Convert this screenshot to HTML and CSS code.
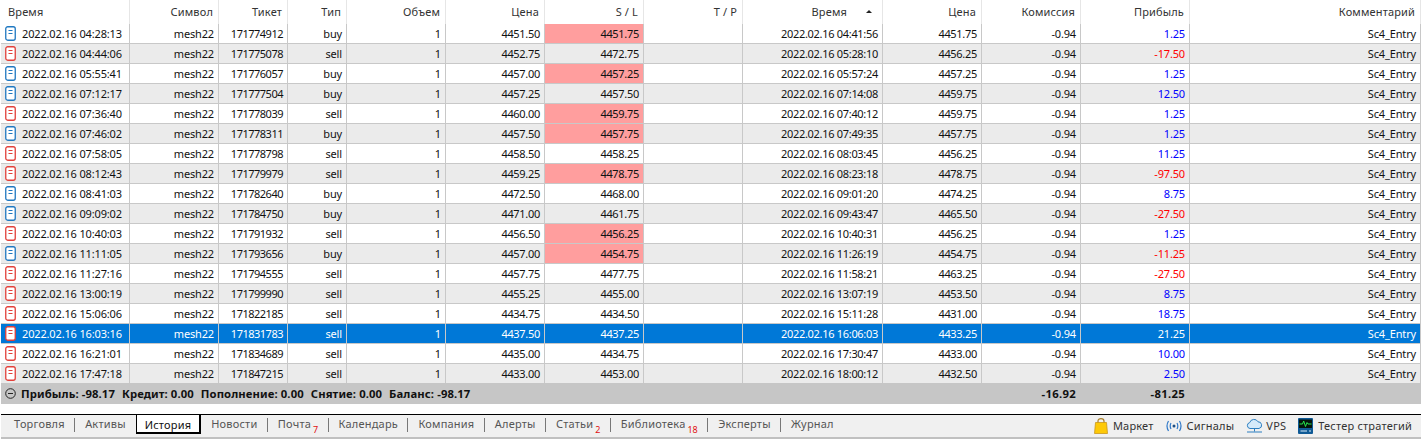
FILE: index.html
```html
<!DOCTYPE html>
<html lang="ru">
<head>
<meta charset="utf-8">
<title>История</title>
<link rel="stylesheet" href="styles.css">
</head>
<body>
<svg class="defs" width="0" height="0" aria-hidden="true">
<symbol id="doc" viewBox="0 0 11 15"><rect x=".75" y=".75" width="9.500" height="13.500" rx="2" fill="#fff" stroke="currentColor" stroke-width="1.300"/><path d="M3.500 4.500h4M3.500 7.500h4" stroke="currentColor" stroke-width="1.100"/></symbol>
</svg>
<main class="terminal">
<table class="grid">
<colgroup><col class="c1"><col class="c2"><col class="c3"><col class="c4"><col class="c5"><col class="c6"><col class="c7"><col class="c8"><col class="c9"><col class="c10"><col class="c11"><col class="c12"><col class="c13"></colgroup>
<thead><tr><th class="left">Время</th><th>Символ</th><th>Тикет</th><th>Тип</th><th>Объем</th><th>Цена</th><th>S / L</th><th>T / P</th><th class="sorted">Время<span class="arrow"></span></th><th>Цена</th><th>Комиссия</th><th>Прибыль</th><th>Комментарий</th></tr></thead>
<tbody>
<tr><td class="left"><svg class="ico buy"><use href="#doc"/></svg>2022.02.16 04:28:13</td><td>mesh22</td><td>171774912</td><td>buy</td><td>1</td><td>4451.50</td><td class="hit">4451.75</td><td></td><td>2022.02.16 04:41:56</td><td>4451.75</td><td>-0.94</td><td class="pos">1.25</td><td>Sc4_Entry</td></tr>
<tr><td class="left"><svg class="ico sell"><use href="#doc"/></svg>2022.02.16 04:44:06</td><td>mesh22</td><td>171775078</td><td>sell</td><td>1</td><td>4452.75</td><td>4472.75</td><td></td><td>2022.02.16 05:28:10</td><td>4456.25</td><td>-0.94</td><td class="neg">-17.50</td><td>Sc4_Entry</td></tr>
<tr><td class="left"><svg class="ico buy"><use href="#doc"/></svg>2022.02.16 05:55:41</td><td>mesh22</td><td>171776057</td><td>buy</td><td>1</td><td>4457.00</td><td class="hit">4457.25</td><td></td><td>2022.02.16 05:57:24</td><td>4457.25</td><td>-0.94</td><td class="pos">1.25</td><td>Sc4_Entry</td></tr>
<tr><td class="left"><svg class="ico buy"><use href="#doc"/></svg>2022.02.16 07:12:17</td><td>mesh22</td><td>171777504</td><td>buy</td><td>1</td><td>4457.25</td><td>4457.50</td><td></td><td>2022.02.16 07:14:08</td><td>4459.75</td><td>-0.94</td><td class="pos">12.50</td><td>Sc4_Entry</td></tr>
<tr><td class="left"><svg class="ico sell"><use href="#doc"/></svg>2022.02.16 07:36:40</td><td>mesh22</td><td>171778039</td><td>sell</td><td>1</td><td>4460.00</td><td class="hit">4459.75</td><td></td><td>2022.02.16 07:40:12</td><td>4459.75</td><td>-0.94</td><td class="pos">1.25</td><td>Sc4_Entry</td></tr>
<tr><td class="left"><svg class="ico buy"><use href="#doc"/></svg>2022.02.16 07:46:02</td><td>mesh22</td><td>171778311</td><td>buy</td><td>1</td><td>4457.50</td><td class="hit">4457.75</td><td></td><td>2022.02.16 07:49:35</td><td>4457.75</td><td>-0.94</td><td class="pos">1.25</td><td>Sc4_Entry</td></tr>
<tr><td class="left"><svg class="ico sell"><use href="#doc"/></svg>2022.02.16 07:58:05</td><td>mesh22</td><td>171778798</td><td>sell</td><td>1</td><td>4458.50</td><td>4458.25</td><td></td><td>2022.02.16 08:03:45</td><td>4456.25</td><td>-0.94</td><td class="pos">11.25</td><td>Sc4_Entry</td></tr>
<tr><td class="left"><svg class="ico sell"><use href="#doc"/></svg>2022.02.16 08:12:43</td><td>mesh22</td><td>171779979</td><td>sell</td><td>1</td><td>4459.25</td><td class="hit">4478.75</td><td></td><td>2022.02.16 08:23:18</td><td>4478.75</td><td>-0.94</td><td class="neg">-97.50</td><td>Sc4_Entry</td></tr>
<tr><td class="left"><svg class="ico buy"><use href="#doc"/></svg>2022.02.16 08:41:03</td><td>mesh22</td><td>171782640</td><td>buy</td><td>1</td><td>4472.50</td><td>4468.00</td><td></td><td>2022.02.16 09:01:20</td><td>4474.25</td><td>-0.94</td><td class="pos">8.75</td><td>Sc4_Entry</td></tr>
<tr><td class="left"><svg class="ico buy"><use href="#doc"/></svg>2022.02.16 09:09:02</td><td>mesh22</td><td>171784750</td><td>buy</td><td>1</td><td>4471.00</td><td>4461.75</td><td></td><td>2022.02.16 09:43:47</td><td>4465.50</td><td>-0.94</td><td class="neg">-27.50</td><td>Sc4_Entry</td></tr>
<tr><td class="left"><svg class="ico sell"><use href="#doc"/></svg>2022.02.16 10:40:03</td><td>mesh22</td><td>171791932</td><td>sell</td><td>1</td><td>4456.50</td><td class="hit">4456.25</td><td></td><td>2022.02.16 10:40:31</td><td>4456.25</td><td>-0.94</td><td class="pos">1.25</td><td>Sc4_Entry</td></tr>
<tr><td class="left"><svg class="ico buy"><use href="#doc"/></svg>2022.02.16 11:11:05</td><td>mesh22</td><td>171793656</td><td>buy</td><td>1</td><td>4457.00</td><td class="hit">4454.75</td><td></td><td>2022.02.16 11:26:19</td><td>4454.75</td><td>-0.94</td><td class="neg">-11.25</td><td>Sc4_Entry</td></tr>
<tr><td class="left"><svg class="ico sell"><use href="#doc"/></svg>2022.02.16 11:27:16</td><td>mesh22</td><td>171794555</td><td>sell</td><td>1</td><td>4457.75</td><td>4477.75</td><td></td><td>2022.02.16 11:58:21</td><td>4463.25</td><td>-0.94</td><td class="neg">-27.50</td><td>Sc4_Entry</td></tr>
<tr><td class="left"><svg class="ico sell"><use href="#doc"/></svg>2022.02.16 13:00:19</td><td>mesh22</td><td>171799990</td><td>sell</td><td>1</td><td>4455.25</td><td>4455.00</td><td></td><td>2022.02.16 13:07:19</td><td>4453.50</td><td>-0.94</td><td class="pos">8.75</td><td>Sc4_Entry</td></tr>
<tr><td class="left"><svg class="ico sell"><use href="#doc"/></svg>2022.02.16 15:06:06</td><td>mesh22</td><td>171822185</td><td>sell</td><td>1</td><td>4434.75</td><td>4434.50</td><td></td><td>2022.02.16 15:11:28</td><td>4431.00</td><td>-0.94</td><td class="pos">18.75</td><td>Sc4_Entry</td></tr>
<tr class="selected"><td class="left"><svg class="ico sell"><use href="#doc"/></svg>2022.02.16 16:03:16</td><td>mesh22</td><td>171831783</td><td>sell</td><td>1</td><td>4437.50</td><td>4437.25</td><td></td><td>2022.02.16 16:06:03</td><td>4433.25</td><td>-0.94</td><td>21.25</td><td>Sc4_Entry</td></tr>
<tr><td class="left"><svg class="ico sell"><use href="#doc"/></svg>2022.02.16 16:21:01</td><td>mesh22</td><td>171834689</td><td>sell</td><td>1</td><td>4435.00</td><td>4434.75</td><td></td><td>2022.02.16 17:30:47</td><td>4433.00</td><td>-0.94</td><td class="pos">10.00</td><td>Sc4_Entry</td></tr>
<tr class="last"><td class="left"><svg class="ico sell"><use href="#doc"/></svg>2022.02.16 17:47:18</td><td>mesh22</td><td>171847215</td><td>sell</td><td>1</td><td>4433.00</td><td>4453.00</td><td></td><td>2022.02.16 18:00:12</td><td>4432.50</td><td>-0.94</td><td class="pos">2.50</td><td>Sc4_Entry</td></tr>
</tbody>
<tfoot><tr><td colspan="10" class="summary"><span class="sum-line"><svg class="collapse" viewBox="0 0 11 11"><circle cx="5.500" cy="5.500" r="4.800" fill="none" stroke="#222"/><path d="M3 5.500h5" stroke="#222"/></svg><span>Прибыль: -98.17</span><span>Кредит: 0.00</span><span>Пополнение: 0.00</span><span>Снятие: 0.00</span><span>Баланс: -98.17</span></span></td><td>-16.92</td><td>-81.25</td><td></td></tr></tfoot>
</table>
<footer class="tabbar">
<nav class="tabs">
<a class="tab">Торговля</a><a class="tab">Активы</a><a class="tab active">История</a><a class="tab first">Новости</a><a class="tab">Почта<sub>7</sub></a><a class="tab">Календарь</a><a class="tab">Компания</a><a class="tab">Алерты</a><a class="tab">Статьи<sub>2</sub></a><a class="tab">Библиотека<sub>18</sub></a><a class="tab">Эксперты</a><a class="tab">Журнал</a>
</nav>
<div class="tools">
<span class="tool"><svg width="14" height="16" viewBox="0 0 14 16"><path d="M4 6V3C4 1.600 5.200 .7 7 .7s3 .9 3 2.300v3" fill="none" stroke="#a87f2a" stroke-width="1.200"/><path d="M1.500 4.500h11l1 11H.5z" fill="#fdc908" stroke="#c9971c" stroke-width=".8"/></svg>Маркет</span>
<span class="tool"><svg width="16" height="12" viewBox="0 0 16 12" fill="none" stroke="#2f78c8" stroke-width="1.200"><path d="M2.500 1Q-.5 6 2.500 11M13.500 1q3 5 0 10M5 3q-1.600 3 0 6M11 3q1.600 3 0 6"/><circle cx="8" cy="6" r="1.500" fill="#1f4f85" stroke="none"/></svg>Сигналы</span>
<span class="tool tight"><svg width="17" height="16" viewBox="0 0 17 16" fill="#d5eafa" stroke="#2d7fc1"><path d="M4 10.500a3 3 0 0 1-.3-5.900A4.500 4.500 0 0 1 12 3.800a3.400 3.400 0 0 1 1 6.700z"/><path d="M8.500 10.500v3M1 14h15" fill="none"/></svg>VPS</span>
<span class="tool"><svg width="15" height="16" viewBox="0 0 15 16"><rect width="15" height="16" rx="1" fill="#0f5a96"/><rect x="1" y="1.500" width="13" height="8.500" fill="#04140c"/><path d="M1.500 6h3l1.200-3 1.800 5.500 1.500-4 1 1.500H13.500" fill="none" stroke="#26e64c"/><path d="M2.500 13h6.500M11 13h2" stroke="#d8ecfa"/></svg>Тестер стратегий</span>
</div>
</footer>
</main>
</body>
</html>
```
FILE: styles.css
```css
* { box-sizing: border-box; }
html, body { margin: 0; padding: 0; background: #fff; }
body { width: 1422px; height: 441px; overflow: hidden; font: 11px/16px "Noto Sans", sans-serif; color: #111; }
.defs { position: absolute; }
.terminal { display: flex; flex-direction: column; height: 441px; padding: 0 1px; }

.grid { width: 1420px; table-layout: fixed; border-collapse: separate; border-spacing: 0; }
.c1 { width: 129px; } .c2 { width: 89px; } .c3 { width: 69px; } .c4 { width: 59px; }
.c5 { width: 99px; } .c6 { width: 99px; } .c7 { width: 99px; } .c8 { width: 99px; }
.c9 { width: 140px; } .c10 { width: 99px; } .c11 { width: 99px; } .c12 { width: 109px; } .c13 { width: 231px; }

th, td { padding: 0 4px 0 0; text-align: right; white-space: nowrap; overflow: hidden; font-weight: 400; letter-spacing: -.15px; }
th { height: 24px; border-right: 1px solid #e6e6e6; color: #333; padding-right: 5px; letter-spacing: .15px; }
tbody td { height: 20px; border-right: 1px solid #c8c8c8; border-bottom: 1px solid #c8c8c8; }
tbody td:nth-child(3) { letter-spacing: -.5px; }
tbody td:nth-child(6), tbody td:nth-child(7), tbody td:nth-child(9), tbody td:nth-child(10) { letter-spacing: -.3px; }
tbody tr:nth-child(even) td { background: #ebebeb; }
tbody tr.last td { height: 19px; border-bottom: 0; }
th.left { text-align: left; padding-left: 7px; }
th.sorted { position: relative; padding-right: 35px; }
.arrow { position: absolute; right: 10px; top: 10px; border: 3.500px solid transparent; border-top: 0; border-bottom: 3px solid #222; }
td.left { text-align: left; padding-left: 4px; }
.ico { width: 11px; height: 15px; margin-right: 6px; vertical-align: -3px; }
.ico.buy { color: #1f78c1; }
.ico.sell { color: #e2403a; }
td.hit, tbody tr:nth-child(even) td.hit { background: #ff9e9e; }
.pos { color: #0000ff; }
.neg { color: #ff0000; }
tbody tr.selected td { background: #0078d7; color: #fff; border-color: #c8c8c8; }

tfoot td { height: 21px; background: #c6c6c6; font-size: 11.300px; font-weight: 700; padding-right: 5px; letter-spacing: .3px; }
td.summary { text-align: left; padding-left: 4px; letter-spacing: .1px; }
.sum-line { display: flex; align-items: center; gap: 7px; }
.collapse { width: 11px; height: 11px; margin-right: -2px; }

.tabbar { margin-top: 10px; height: 25px; border-top: 1px solid #000; border-bottom: 2px solid #c0c0c0; background: #f0f0f0; display: flex; justify-content: space-between; color: #555; }
.tabs { display: flex; align-items: flex-start; padding-left: 2px; }
.tab { position: relative; padding: 1px 9.400px 0 10px; height: 21px; letter-spacing: .2px; border-left: 1px solid transparent; }
.tab + .tab::before { content: ""; position: absolute; left: -1px; top: 3px; height: 14px; width: 1px; background: #777; }
.tab.active { margin: -1px 0 0 .6px; height: 20px; padding: 2px 8px 0; background: #fff; color: #111; border: solid #000; border-width: 1px 2px 2px 1px; }
.tab.first { margin-left: -1px; }
.tab.active::before, .tab.first::before { display: none; }
sub { font-size: 9px; line-height: 1; color: #e01010; vertical-align: -5px; margin-left: 2px; letter-spacing: 0; }
.tools { display: flex; align-items: center; gap: 12px; padding-right: 9px; color: #333; height: 21px; }
.tool { display: flex; align-items: center; gap: 5px; letter-spacing: .2px; }
.tool.tight { gap: 3px; }
```
